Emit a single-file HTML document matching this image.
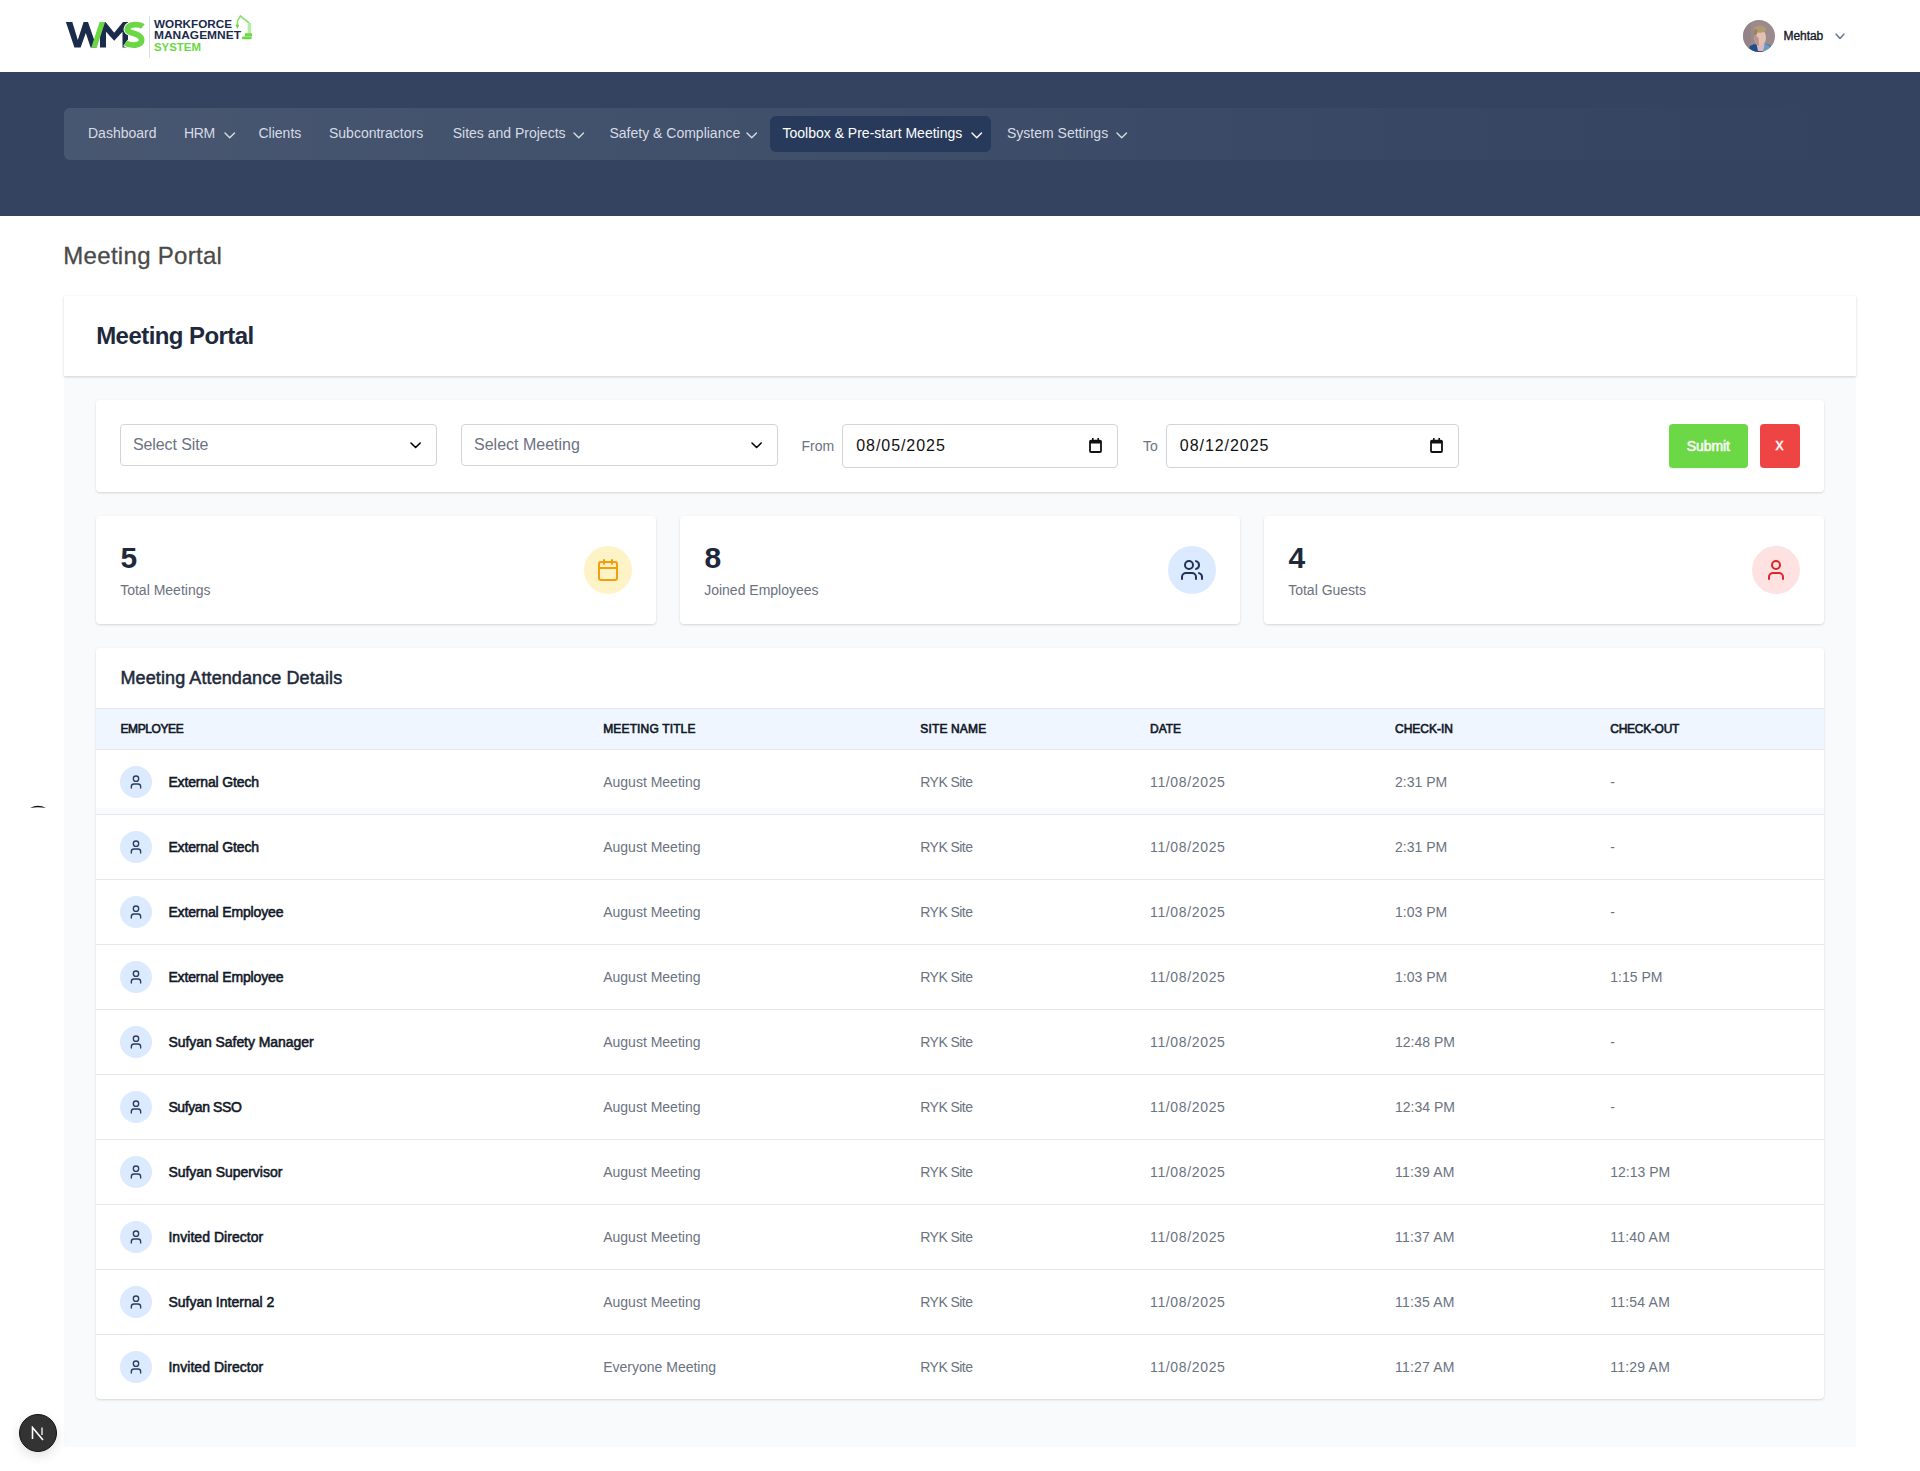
<!DOCTYPE html>
<html><head><meta charset="utf-8"><title>Meeting Portal</title>
<style>
html,body{margin:0;padding:0;}
body{width:1920px;height:1471px;position:relative;overflow:hidden;background:#fff;font-family:"Liberation Sans", sans-serif;}
.t{position:absolute;white-space:nowrap;line-height:1;}
</style></head><body>
<div style="position:absolute;left:0px;top:0px;width:1920px;height:72px;background:#ffffff;"></div>
<svg style="position:absolute;left:0px;top:0px" width="270" height="64" viewBox="0 0 270 64">
<path d="M65.9 21.9 L72.3 21.9 L77.8 40 L83.6 21.9 L88 21.9 L96.8 47.6 L90.6 47.6 L85.8 33 L80.6 47.6 L74.4 47.6 Z" fill="#1b2b4b"/>
<path d="M100 47.6 L100 21.9 L105.5 21.9 L114.2 32.7 L123 21.9 L128 21.9 L128 47.6 L122.5 47.6 L122.5 31.7 L114.2 40.7 L106 31.7 L106 47.6 Z" fill="#1b2b4b"/>
<path d="M91.3 47.6 L96.8 47.6 L105.1 21.9 L99.6 21.9 Z" fill="#6bd744"/>
<path d="M142.8 26.6 C139.2 23.6 128.6 23.6 127.4 28.8 C126.4 34.2 141.6 32.4 141.6 40 C141.6 46.2 130.2 46.2 125.4 42.8" fill="none" stroke="#ffffff" stroke-width="7.6"/>
<path d="M142.8 26.6 C139.2 23.6 128.6 23.6 127.4 28.8 C126.4 34.2 141.6 32.4 141.6 40 C141.6 46.2 130.2 46.2 125.4 42.8" fill="none" stroke="#6bd744" stroke-width="5.8"/>
<rect x="149" y="16" width="1" height="42" fill="#d9dde3"/>
<text x="154" y="28" font-family="Liberation Sans" font-weight="700" font-size="11" fill="#1b2b4b" textLength="78" lengthAdjust="spacingAndGlyphs">WORKFORCE</text>
<text x="154" y="39.2" font-family="Liberation Sans" font-weight="700" font-size="11" fill="#1b2b4b" textLength="87" lengthAdjust="spacingAndGlyphs">MANAGEMNET</text>
<text x="154" y="50.6" font-family="Liberation Sans" font-weight="700" font-size="10.6" fill="#6bd744" textLength="47" lengthAdjust="spacingAndGlyphs">SYSTEM</text>
<path d="M237.4 24 L237.4 21.2 L240.4 16 L249.2 23" fill="none" stroke="#8fe06e" stroke-width="1.6"/>
<circle cx="237.4" cy="25.6" r="1.6" fill="#6bd744"/>
<rect x="236.8" y="26.5" width="1.3" height="2" fill="#7ddc5a"/>
<rect x="247.6" y="23" width="3.4" height="11" fill="#b8eca2"/>
<rect x="245" y="33.3" width="7" height="3" fill="#6bd744"/>
<rect x="242" y="36.6" width="9.6" height="2.6" rx="1" fill="#6bd744"/>
</svg>
<svg style="position:absolute;left:1743px;top:20px" width="32" height="32" viewBox="0 0 32 32">
<defs><clipPath id="avc"><circle cx="16" cy="16" r="16"/></clipPath><filter id="avb" x="-20%" y="-20%" width="140%" height="140%"><feGaussianBlur stdDeviation="0.7"/></filter></defs>
<g clip-path="url(#avc)">
<rect width="32" height="32" fill="#9b8a8d"/>
<rect x="0" y="0" width="8" height="32" fill="#8f7f83" opacity="0.6"/>
<g filter="url(#avb)">
<path d="M4 34 L7 26 C10 24 13 24 15 25 L22 24 C26 24 29 26 30 30 L30 34 Z" fill="#224d88"/>
<path d="M21 24 C25 24 28 26 29.5 29 L29 34 L21 34 Z" fill="#6b9ac6"/>
<path d="M13.5 24 L21.5 24 L20.5 31 L15 31 Z" fill="#dcb8c2"/>
<ellipse cx="17.2" cy="17.5" rx="5.8" ry="8.2" fill="#e2c1b3"/>
<path d="M11.5 14 C11.5 20 13 25 16 26 L15.5 18 Z" fill="#8a5d52" opacity="0.45"/>
<ellipse cx="16.8" cy="9.2" rx="6.3" ry="3.6" fill="#b09a72"/>
<ellipse cx="12.6" cy="12" rx="1.8" ry="3" fill="#9c8460"/>
</g>
</g>
</svg>
<div class="t" style="left:1783.5px;top:29.84px;font-size:12px;color:#111827;-webkit-text-stroke:0.35px #111827;letter-spacing:-0.05px;">Mehtab</div>
<svg style="position:absolute;left:1834px;top:31.5px" width="12" height="8.5" viewBox="0 0 12 8.5"><path d="M2 2 L6.0 6.5 L10 2" fill="none" stroke="#64748b" stroke-width="1.4" stroke-linecap="round" stroke-linejoin="round"/></svg>
<div style="position:absolute;left:0px;top:72px;width:1920px;height:144px;background:#334360;"></div>
<div style="position:absolute;left:64px;top:108px;width:1792px;height:52px;border-radius:6px;background:linear-gradient(90deg, rgba(255,255,255,0.105) 0%, rgba(255,255,255,0) 100%);"></div>
<div style="position:absolute;left:770px;top:116px;width:221px;height:36px;border-radius:6px;background:#283a5b;"></div>
<div class="t" style="left:88px;top:126.05px;font-size:14px;color:#d6dce5;">Dashboard</div>
<div class="t" style="left:184px;top:126.05px;font-size:14px;color:#d6dce5;letter-spacing:-0.3px;">HRM</div>
<svg style="position:absolute;left:222.6px;top:130.5px" width="13.5" height="8.8" viewBox="0 0 13.5 8.8"><path d="M2 2 L6.75 6.8 L11.5 2" fill="none" stroke="#d6dce5" stroke-width="1.4" stroke-linecap="round" stroke-linejoin="round"/></svg>
<div class="t" style="left:258.5px;top:126.05px;font-size:14px;color:#d6dce5;">Clients</div>
<div class="t" style="left:329px;top:126.05px;font-size:14px;color:#d6dce5;">Subcontractors</div>
<div class="t" style="left:452.7px;top:126.05px;font-size:14px;color:#d6dce5;">Sites and Projects</div>
<svg style="position:absolute;left:572px;top:130.5px" width="13.5" height="8.8" viewBox="0 0 13.5 8.8"><path d="M2 2 L6.75 6.8 L11.5 2" fill="none" stroke="#d6dce5" stroke-width="1.4" stroke-linecap="round" stroke-linejoin="round"/></svg>
<div class="t" style="left:609.5px;top:126.05px;font-size:14px;color:#d6dce5;">Safety &amp; Compliance</div>
<svg style="position:absolute;left:745px;top:130.5px" width="13.5" height="8.8" viewBox="0 0 13.5 8.8"><path d="M2 2 L6.75 6.8 L11.5 2" fill="none" stroke="#d6dce5" stroke-width="1.4" stroke-linecap="round" stroke-linejoin="round"/></svg>
<div class="t" style="left:782.5px;top:126.05px;font-size:14px;color:#ffffff;">Toolbox &amp; Pre-start Meetings</div>
<svg style="position:absolute;left:970px;top:130.5px" width="13.5" height="8.8" viewBox="0 0 13.5 8.8"><path d="M2 2 L6.75 6.8 L11.5 2" fill="none" stroke="#ffffff" stroke-width="1.4" stroke-linecap="round" stroke-linejoin="round"/></svg>
<div class="t" style="left:1007px;top:126.05px;font-size:14px;color:#d6dce5;">System Settings</div>
<svg style="position:absolute;left:1115px;top:130.5px" width="13.5" height="8.8" viewBox="0 0 13.5 8.8"><path d="M2 2 L6.75 6.8 L11.5 2" fill="none" stroke="#d6dce5" stroke-width="1.4" stroke-linecap="round" stroke-linejoin="round"/></svg>
<div class="t" style="left:63.3px;top:244.28px;font-size:24px;color:#4a4a4a;-webkit-text-stroke:0.3px #4a4a4a;letter-spacing:0.3px;">Meeting Portal</div>
<div style="position:absolute;left:64px;top:376px;width:1792px;height:1071px;background:#f8fafc;"></div>
<div style="position:absolute;left:64px;top:296px;width:1792px;height:80px;background:#ffffff;box-shadow:0 1px 3px rgba(0,0,0,0.10),0 1px 2px rgba(0,0,0,0.08);"></div>
<div class="t" style="left:96.2px;top:323.68px;font-size:24px;color:#1e293b;font-weight:700;letter-spacing:-0.56px;">Meeting Portal</div>
<div style="position:absolute;left:96px;top:400px;width:1728px;height:92px;background:#fff;border-radius:4px;box-shadow:0 1px 3px rgba(0,0,0,0.1),0 1px 2px rgba(0,0,0,0.06);"></div>
<div style="position:absolute;left:120px;top:424px;width:317px;height:42px;box-sizing:border-box;border:1px solid #d1d5db;border-radius:4px;background:#fff;"></div>
<div class="t" style="left:133px;top:436.76px;font-size:16px;color:#6b7280;letter-spacing:-0.1px;">Select Site</div>
<svg style="position:absolute;left:409.4px;top:440.8px" width="13.2" height="8.5" viewBox="0 0 13.2 8.5"><path d="M2 2 L6.6 6.5 L11.2 2" fill="none" stroke="#000000" stroke-width="1.6" stroke-linecap="round" stroke-linejoin="round"/></svg>
<div style="position:absolute;left:461px;top:424px;width:317px;height:42px;box-sizing:border-box;border:1px solid #d1d5db;border-radius:4px;background:#fff;"></div>
<div class="t" style="left:474px;top:436.76px;font-size:16px;color:#6b7280;">Select Meeting</div>
<svg style="position:absolute;left:750.4px;top:440.8px" width="13.2" height="8.5" viewBox="0 0 13.2 8.5"><path d="M2 2 L6.6 6.5 L11.2 2" fill="none" stroke="#000000" stroke-width="1.6" stroke-linecap="round" stroke-linejoin="round"/></svg>
<div class="t" style="left:801.5px;top:439.45px;font-size:14px;color:#6b7280;">From</div>
<div style="position:absolute;left:842px;top:424px;width:276px;height:44px;box-sizing:border-box;border:1px solid #d1d5db;border-radius:4px;background:#fff;"></div>
<div class="t" style="left:1143px;top:439.45px;font-size:14px;color:#6b7280;">To</div>
<div style="position:absolute;left:1166px;top:424px;width:293px;height:44px;box-sizing:border-box;border:1px solid #d1d5db;border-radius:4px;background:#fff;"></div>
<div class="t" style="left:856.2px;top:437.76px;font-size:16px;color:#111111;letter-spacing:0.95px;">08/05/2025</div>
<div class="t" style="left:1179.8px;top:437.76px;font-size:16px;color:#111111;letter-spacing:0.95px;">08/12/2025</div>
<svg style="position:absolute;left:1088.5px;top:438px" width="13" height="15" viewBox="0 0 13 15"><rect x="1" y="2.6" width="11" height="11.4" rx="1" fill="none" stroke="#111" stroke-width="1.8"/><rect x="1" y="2" width="11" height="3.5" fill="#111"/><rect x="3" y="0" width="1.6" height="3" fill="#111"/><rect x="8.4" y="0" width="1.6" height="3" fill="#111"/></svg>
<svg style="position:absolute;left:1429.5px;top:438px" width="13" height="15" viewBox="0 0 13 15"><rect x="1" y="2.6" width="11" height="11.4" rx="1" fill="none" stroke="#111" stroke-width="1.8"/><rect x="1" y="2" width="11" height="3.5" fill="#111"/><rect x="3" y="0" width="1.6" height="3" fill="#111"/><rect x="8.4" y="0" width="1.6" height="3" fill="#111"/></svg>
<div style="position:absolute;left:1669px;top:424px;width:79px;height:44px;border-radius:4px;background:#6dd845;box-shadow:0 1px 2px rgba(0,0,0,0.08);"></div>
<div class="t" style="left:1686.8px;top:438.95px;font-size:14px;color:#ffffff;-webkit-text-stroke:0.5px #ffffff;letter-spacing:-0.1px;">Submit</div>
<div style="position:absolute;left:1760px;top:424px;width:40px;height:44px;border-radius:4px;background:#ef4444;"></div>
<div class="t" style="left:1775.5px;top:437.26px;font-size:16px;color:#ffffff;-webkit-text-stroke:0.45px #ffffff;">x</div>
<div style="position:absolute;left:96px;top:516px;width:560px;height:108px;background:#fff;border-radius:4px;box-shadow:0 1px 3px rgba(0,0,0,0.1),0 1px 2px rgba(0,0,0,0.06);"></div>
<div class="t" style="left:120.5px;top:542.61px;font-size:30px;color:#1e293b;font-weight:700;">5</div>
<div class="t" style="left:120.2px;top:582.95px;font-size:14px;color:#6b7280;">Total Meetings</div>
<div style="position:absolute;left:584px;top:546px;width:48px;height:48px;border-radius:50%;background:#fef3c7;"></div>
<svg style="position:absolute;left:596px;top:558px" width="24" height="24" viewBox="0 0 24 24" fill="none" stroke="#f59e0b" stroke-width="2" stroke-linecap="round" stroke-linejoin="round"><rect width="18" height="18" x="3" y="4" rx="2"/><path d="M8 2v4"/><path d="M16 2v4"/><path d="M3 10h18"/></svg>
<div style="position:absolute;left:680px;top:516px;width:560px;height:108px;background:#fff;border-radius:4px;box-shadow:0 1px 3px rgba(0,0,0,0.1),0 1px 2px rgba(0,0,0,0.06);"></div>
<div class="t" style="left:704.5px;top:542.61px;font-size:30px;color:#1e293b;font-weight:700;">8</div>
<div class="t" style="left:704.2px;top:582.95px;font-size:14px;color:#6b7280;">Joined Employees</div>
<div style="position:absolute;left:1168px;top:546px;width:48px;height:48px;border-radius:50%;background:#dbeafe;"></div>
<svg style="position:absolute;left:1180px;top:558px" width="24" height="24" viewBox="0 0 24 24" fill="none" stroke="#213457" stroke-width="2" stroke-linecap="round" stroke-linejoin="round"><path d="M16 21v-2a4 4 0 0 0-4-4H6a4 4 0 0 0-4 4v2"/><circle cx="9" cy="7" r="4"/><path d="M22 21v-2a4 4 0 0 0-3-3.87"/><path d="M16 3.13a4 4 0 0 1 0 7.75"/></svg>
<div style="position:absolute;left:1264px;top:516px;width:560px;height:108px;background:#fff;border-radius:4px;box-shadow:0 1px 3px rgba(0,0,0,0.1),0 1px 2px rgba(0,0,0,0.06);"></div>
<div class="t" style="left:1288.5px;top:542.61px;font-size:30px;color:#1e293b;font-weight:700;">4</div>
<div class="t" style="left:1288.2px;top:582.95px;font-size:14px;color:#6b7280;">Total Guests</div>
<div style="position:absolute;left:1752px;top:546px;width:48px;height:48px;border-radius:50%;background:#fee2e2;"></div>
<svg style="position:absolute;left:1764px;top:558px" width="24" height="24" viewBox="0 0 24 24" fill="none" stroke="#dc2626" stroke-width="2" stroke-linecap="round" stroke-linejoin="round"><path d="M19 21v-2a4 4 0 0 0-4-4H9a4 4 0 0 0-4 4v2"/><circle cx="12" cy="7" r="4"/></svg>
<div style="position:absolute;left:96px;top:648px;width:1728px;height:751px;background:#fff;border-radius:4px;box-shadow:0 1px 3px rgba(0,0,0,0.1),0 1px 2px rgba(0,0,0,0.06);overflow:hidden;"></div>
<div class="t" style="left:120.5px;top:668.76px;font-size:18px;color:#1e293b;-webkit-text-stroke:0.5px #1e293b;letter-spacing:0.1px;">Meeting Attendance Details</div>
<div style="position:absolute;left:96px;top:708px;width:1728px;height:41px;background:#eff6ff;border-top:0px solid #e5e7eb;"></div>
<div style="position:absolute;left:96px;top:708px;width:1728px;height:1px;background:#e5e7eb;"></div>
<div style="position:absolute;left:96px;top:749px;width:1728px;height:1px;background:#e5e7eb;"></div>
<div class="t" style="left:120.5px;top:722.84px;font-size:12px;color:#111827;-webkit-text-stroke:0.6px #111827;letter-spacing:-0.4px;">EMPLOYEE</div>
<div class="t" style="left:603.2px;top:722.84px;font-size:12px;color:#111827;-webkit-text-stroke:0.6px #111827;letter-spacing:0.15px;">MEETING TITLE</div>
<div class="t" style="left:920.3px;top:722.84px;font-size:12px;color:#111827;-webkit-text-stroke:0.6px #111827;letter-spacing:0.15px;">SITE NAME</div>
<div class="t" style="left:1150px;top:722.84px;font-size:12px;color:#111827;-webkit-text-stroke:0.6px #111827;">DATE</div>
<div class="t" style="left:1395px;top:722.84px;font-size:12px;color:#111827;-webkit-text-stroke:0.6px #111827;">CHECK-IN</div>
<div class="t" style="left:1610.3px;top:722.84px;font-size:12px;color:#111827;-webkit-text-stroke:0.6px #111827;letter-spacing:-0.28px;">CHECK-OUT</div>
<div style="position:absolute;left:96px;top:814px;width:1728px;height:1px;background:#e5e7eb;"></div>
<div style="position:absolute;left:120px;top:766px;width:32px;height:32px;border-radius:50%;background:#dbeafe;"></div>
<svg style="position:absolute;left:128px;top:774px" width="16" height="16" viewBox="0 0 24 24" fill="none" stroke="#2c3d5c" stroke-width="2" stroke-linecap="round" stroke-linejoin="round"><path d="M19 21v-2a4 4 0 0 0-4-4H9a4 4 0 0 0-4 4v2"/><circle cx="12" cy="7" r="4"/></svg>
<div class="t" style="left:168.4px;top:775.35px;font-size:14px;color:#111827;-webkit-text-stroke:0.55px #111827;letter-spacing:-0.15px;">External Gtech</div>
<div class="t" style="left:603.2px;top:775.35px;font-size:14px;color:#6b7280;">August Meeting</div>
<div class="t" style="left:920.3px;top:775.35px;font-size:14px;color:#6b7280;letter-spacing:-0.55px;">RYK Site</div>
<div class="t" style="left:1150px;top:775.35px;font-size:14px;color:#6b7280;letter-spacing:0.65px;">11/08/2025</div>
<div class="t" style="left:1395px;top:775.35px;font-size:14px;color:#6b7280;">2:31 PM</div>
<div class="t" style="left:1610.3px;top:775.35px;font-size:14px;color:#6b7280;">-</div>
<div style="position:absolute;left:96px;top:879px;width:1728px;height:1px;background:#e5e7eb;"></div>
<div style="position:absolute;left:120px;top:831px;width:32px;height:32px;border-radius:50%;background:#dbeafe;"></div>
<svg style="position:absolute;left:128px;top:839px" width="16" height="16" viewBox="0 0 24 24" fill="none" stroke="#2c3d5c" stroke-width="2" stroke-linecap="round" stroke-linejoin="round"><path d="M19 21v-2a4 4 0 0 0-4-4H9a4 4 0 0 0-4 4v2"/><circle cx="12" cy="7" r="4"/></svg>
<div class="t" style="left:168.4px;top:840.35px;font-size:14px;color:#111827;-webkit-text-stroke:0.55px #111827;letter-spacing:-0.15px;">External Gtech</div>
<div class="t" style="left:603.2px;top:840.35px;font-size:14px;color:#6b7280;">August Meeting</div>
<div class="t" style="left:920.3px;top:840.35px;font-size:14px;color:#6b7280;letter-spacing:-0.55px;">RYK Site</div>
<div class="t" style="left:1150px;top:840.35px;font-size:14px;color:#6b7280;letter-spacing:0.65px;">11/08/2025</div>
<div class="t" style="left:1395px;top:840.35px;font-size:14px;color:#6b7280;">2:31 PM</div>
<div class="t" style="left:1610.3px;top:840.35px;font-size:14px;color:#6b7280;">-</div>
<div style="position:absolute;left:96px;top:944px;width:1728px;height:1px;background:#e5e7eb;"></div>
<div style="position:absolute;left:120px;top:896px;width:32px;height:32px;border-radius:50%;background:#dbeafe;"></div>
<svg style="position:absolute;left:128px;top:904px" width="16" height="16" viewBox="0 0 24 24" fill="none" stroke="#2c3d5c" stroke-width="2" stroke-linecap="round" stroke-linejoin="round"><path d="M19 21v-2a4 4 0 0 0-4-4H9a4 4 0 0 0-4 4v2"/><circle cx="12" cy="7" r="4"/></svg>
<div class="t" style="left:168.4px;top:905.35px;font-size:14px;color:#111827;-webkit-text-stroke:0.55px #111827;letter-spacing:-0.15px;">External Employee</div>
<div class="t" style="left:603.2px;top:905.35px;font-size:14px;color:#6b7280;">August Meeting</div>
<div class="t" style="left:920.3px;top:905.35px;font-size:14px;color:#6b7280;letter-spacing:-0.55px;">RYK Site</div>
<div class="t" style="left:1150px;top:905.35px;font-size:14px;color:#6b7280;letter-spacing:0.65px;">11/08/2025</div>
<div class="t" style="left:1395px;top:905.35px;font-size:14px;color:#6b7280;">1:03 PM</div>
<div class="t" style="left:1610.3px;top:905.35px;font-size:14px;color:#6b7280;">-</div>
<div style="position:absolute;left:96px;top:1009px;width:1728px;height:1px;background:#e5e7eb;"></div>
<div style="position:absolute;left:120px;top:961px;width:32px;height:32px;border-radius:50%;background:#dbeafe;"></div>
<svg style="position:absolute;left:128px;top:969px" width="16" height="16" viewBox="0 0 24 24" fill="none" stroke="#2c3d5c" stroke-width="2" stroke-linecap="round" stroke-linejoin="round"><path d="M19 21v-2a4 4 0 0 0-4-4H9a4 4 0 0 0-4 4v2"/><circle cx="12" cy="7" r="4"/></svg>
<div class="t" style="left:168.4px;top:970.35px;font-size:14px;color:#111827;-webkit-text-stroke:0.55px #111827;letter-spacing:-0.15px;">External Employee</div>
<div class="t" style="left:603.2px;top:970.35px;font-size:14px;color:#6b7280;">August Meeting</div>
<div class="t" style="left:920.3px;top:970.35px;font-size:14px;color:#6b7280;letter-spacing:-0.55px;">RYK Site</div>
<div class="t" style="left:1150px;top:970.35px;font-size:14px;color:#6b7280;letter-spacing:0.65px;">11/08/2025</div>
<div class="t" style="left:1395px;top:970.35px;font-size:14px;color:#6b7280;">1:03 PM</div>
<div class="t" style="left:1610.3px;top:970.35px;font-size:14px;color:#6b7280;">1:15 PM</div>
<div style="position:absolute;left:96px;top:1074px;width:1728px;height:1px;background:#e5e7eb;"></div>
<div style="position:absolute;left:120px;top:1026px;width:32px;height:32px;border-radius:50%;background:#dbeafe;"></div>
<svg style="position:absolute;left:128px;top:1034px" width="16" height="16" viewBox="0 0 24 24" fill="none" stroke="#2c3d5c" stroke-width="2" stroke-linecap="round" stroke-linejoin="round"><path d="M19 21v-2a4 4 0 0 0-4-4H9a4 4 0 0 0-4 4v2"/><circle cx="12" cy="7" r="4"/></svg>
<div class="t" style="left:168.4px;top:1035.35px;font-size:14px;color:#111827;-webkit-text-stroke:0.55px #111827;letter-spacing:-0.05px;">Sufyan Safety Manager</div>
<div class="t" style="left:603.2px;top:1035.35px;font-size:14px;color:#6b7280;">August Meeting</div>
<div class="t" style="left:920.3px;top:1035.35px;font-size:14px;color:#6b7280;letter-spacing:-0.55px;">RYK Site</div>
<div class="t" style="left:1150px;top:1035.35px;font-size:14px;color:#6b7280;letter-spacing:0.65px;">11/08/2025</div>
<div class="t" style="left:1395px;top:1035.35px;font-size:14px;color:#6b7280;">12:48 PM</div>
<div class="t" style="left:1610.3px;top:1035.35px;font-size:14px;color:#6b7280;">-</div>
<div style="position:absolute;left:96px;top:1139px;width:1728px;height:1px;background:#e5e7eb;"></div>
<div style="position:absolute;left:120px;top:1091px;width:32px;height:32px;border-radius:50%;background:#dbeafe;"></div>
<svg style="position:absolute;left:128px;top:1099px" width="16" height="16" viewBox="0 0 24 24" fill="none" stroke="#2c3d5c" stroke-width="2" stroke-linecap="round" stroke-linejoin="round"><path d="M19 21v-2a4 4 0 0 0-4-4H9a4 4 0 0 0-4 4v2"/><circle cx="12" cy="7" r="4"/></svg>
<div class="t" style="left:168.4px;top:1100.35px;font-size:14px;color:#111827;-webkit-text-stroke:0.55px #111827;letter-spacing:-0.4px;">Sufyan SSO</div>
<div class="t" style="left:603.2px;top:1100.35px;font-size:14px;color:#6b7280;">August Meeting</div>
<div class="t" style="left:920.3px;top:1100.35px;font-size:14px;color:#6b7280;letter-spacing:-0.55px;">RYK Site</div>
<div class="t" style="left:1150px;top:1100.35px;font-size:14px;color:#6b7280;letter-spacing:0.65px;">11/08/2025</div>
<div class="t" style="left:1395px;top:1100.35px;font-size:14px;color:#6b7280;">12:34 PM</div>
<div class="t" style="left:1610.3px;top:1100.35px;font-size:14px;color:#6b7280;">-</div>
<div style="position:absolute;left:96px;top:1204px;width:1728px;height:1px;background:#e5e7eb;"></div>
<div style="position:absolute;left:120px;top:1156px;width:32px;height:32px;border-radius:50%;background:#dbeafe;"></div>
<svg style="position:absolute;left:128px;top:1164px" width="16" height="16" viewBox="0 0 24 24" fill="none" stroke="#2c3d5c" stroke-width="2" stroke-linecap="round" stroke-linejoin="round"><path d="M19 21v-2a4 4 0 0 0-4-4H9a4 4 0 0 0-4 4v2"/><circle cx="12" cy="7" r="4"/></svg>
<div class="t" style="left:168.4px;top:1165.35px;font-size:14px;color:#111827;-webkit-text-stroke:0.55px #111827;letter-spacing:-0.03px;">Sufyan Supervisor</div>
<div class="t" style="left:603.2px;top:1165.35px;font-size:14px;color:#6b7280;">August Meeting</div>
<div class="t" style="left:920.3px;top:1165.35px;font-size:14px;color:#6b7280;letter-spacing:-0.55px;">RYK Site</div>
<div class="t" style="left:1150px;top:1165.35px;font-size:14px;color:#6b7280;letter-spacing:0.65px;">11/08/2025</div>
<div class="t" style="left:1395px;top:1165.35px;font-size:14px;color:#6b7280;letter-spacing:0.2px;">11:39 AM</div>
<div class="t" style="left:1610.3px;top:1165.35px;font-size:14px;color:#6b7280;">12:13 PM</div>
<div style="position:absolute;left:96px;top:1269px;width:1728px;height:1px;background:#e5e7eb;"></div>
<div style="position:absolute;left:120px;top:1221px;width:32px;height:32px;border-radius:50%;background:#dbeafe;"></div>
<svg style="position:absolute;left:128px;top:1229px" width="16" height="16" viewBox="0 0 24 24" fill="none" stroke="#2c3d5c" stroke-width="2" stroke-linecap="round" stroke-linejoin="round"><path d="M19 21v-2a4 4 0 0 0-4-4H9a4 4 0 0 0-4 4v2"/><circle cx="12" cy="7" r="4"/></svg>
<div class="t" style="left:168.4px;top:1230.35px;font-size:14px;color:#111827;-webkit-text-stroke:0.55px #111827;letter-spacing:0.05px;">Invited Director</div>
<div class="t" style="left:603.2px;top:1230.35px;font-size:14px;color:#6b7280;">August Meeting</div>
<div class="t" style="left:920.3px;top:1230.35px;font-size:14px;color:#6b7280;letter-spacing:-0.55px;">RYK Site</div>
<div class="t" style="left:1150px;top:1230.35px;font-size:14px;color:#6b7280;letter-spacing:0.65px;">11/08/2025</div>
<div class="t" style="left:1395px;top:1230.35px;font-size:14px;color:#6b7280;letter-spacing:0.2px;">11:37 AM</div>
<div class="t" style="left:1610.3px;top:1230.35px;font-size:14px;color:#6b7280;letter-spacing:0.2px;">11:40 AM</div>
<div style="position:absolute;left:96px;top:1334px;width:1728px;height:1px;background:#e5e7eb;"></div>
<div style="position:absolute;left:120px;top:1286px;width:32px;height:32px;border-radius:50%;background:#dbeafe;"></div>
<svg style="position:absolute;left:128px;top:1294px" width="16" height="16" viewBox="0 0 24 24" fill="none" stroke="#2c3d5c" stroke-width="2" stroke-linecap="round" stroke-linejoin="round"><path d="M19 21v-2a4 4 0 0 0-4-4H9a4 4 0 0 0-4 4v2"/><circle cx="12" cy="7" r="4"/></svg>
<div class="t" style="left:168.4px;top:1295.35px;font-size:14px;color:#111827;-webkit-text-stroke:0.55px #111827;">Sufyan Internal 2</div>
<div class="t" style="left:603.2px;top:1295.35px;font-size:14px;color:#6b7280;">August Meeting</div>
<div class="t" style="left:920.3px;top:1295.35px;font-size:14px;color:#6b7280;letter-spacing:-0.55px;">RYK Site</div>
<div class="t" style="left:1150px;top:1295.35px;font-size:14px;color:#6b7280;letter-spacing:0.65px;">11/08/2025</div>
<div class="t" style="left:1395px;top:1295.35px;font-size:14px;color:#6b7280;letter-spacing:0.2px;">11:35 AM</div>
<div class="t" style="left:1610.3px;top:1295.35px;font-size:14px;color:#6b7280;letter-spacing:0.2px;">11:54 AM</div>
<div style="position:absolute;left:120px;top:1351px;width:32px;height:32px;border-radius:50%;background:#dbeafe;"></div>
<svg style="position:absolute;left:128px;top:1359px" width="16" height="16" viewBox="0 0 24 24" fill="none" stroke="#2c3d5c" stroke-width="2" stroke-linecap="round" stroke-linejoin="round"><path d="M19 21v-2a4 4 0 0 0-4-4H9a4 4 0 0 0-4 4v2"/><circle cx="12" cy="7" r="4"/></svg>
<div class="t" style="left:168.4px;top:1360.35px;font-size:14px;color:#111827;-webkit-text-stroke:0.55px #111827;letter-spacing:0.05px;">Invited Director</div>
<div class="t" style="left:603.2px;top:1360.35px;font-size:14px;color:#6b7280;">Everyone Meeting</div>
<div class="t" style="left:920.3px;top:1360.35px;font-size:14px;color:#6b7280;letter-spacing:-0.55px;">RYK Site</div>
<div class="t" style="left:1150px;top:1360.35px;font-size:14px;color:#6b7280;letter-spacing:0.65px;">11/08/2025</div>
<div class="t" style="left:1395px;top:1360.35px;font-size:14px;color:#6b7280;letter-spacing:0.2px;">11:27 AM</div>
<div class="t" style="left:1610.3px;top:1360.35px;font-size:14px;color:#6b7280;letter-spacing:0.2px;">11:29 AM</div>
<div style="position:absolute;left:96px;top:808px;width:1728px;height:6px;background:#f8fafc;"></div>
<svg style="position:absolute;left:26px;top:800px" width="24" height="12" viewBox="0 0 24 12"><path d="M4 8 Q12 3.6 20 8 Q12 6.6 4 8 Z" fill="#111"/></svg>
<div style="position:absolute;left:19px;top:1414px;width:38px;height:38px;border-radius:50%;background:#333;box-sizing:border-box;border:1.5px solid #111;box-shadow:0 4px 12px rgba(0,0,0,0.12);"></div>
<svg style="position:absolute;left:31px;top:1426px" width="14" height="15" viewBox="0 0 14 15"><path d="M1.5 13 V1.5 L12 14" fill="none" stroke="#fff" stroke-width="1.6"/><path d="M11 1.5 V9" stroke="#fff" stroke-width="1.6" opacity="0.8"/></svg>
</body></html>
